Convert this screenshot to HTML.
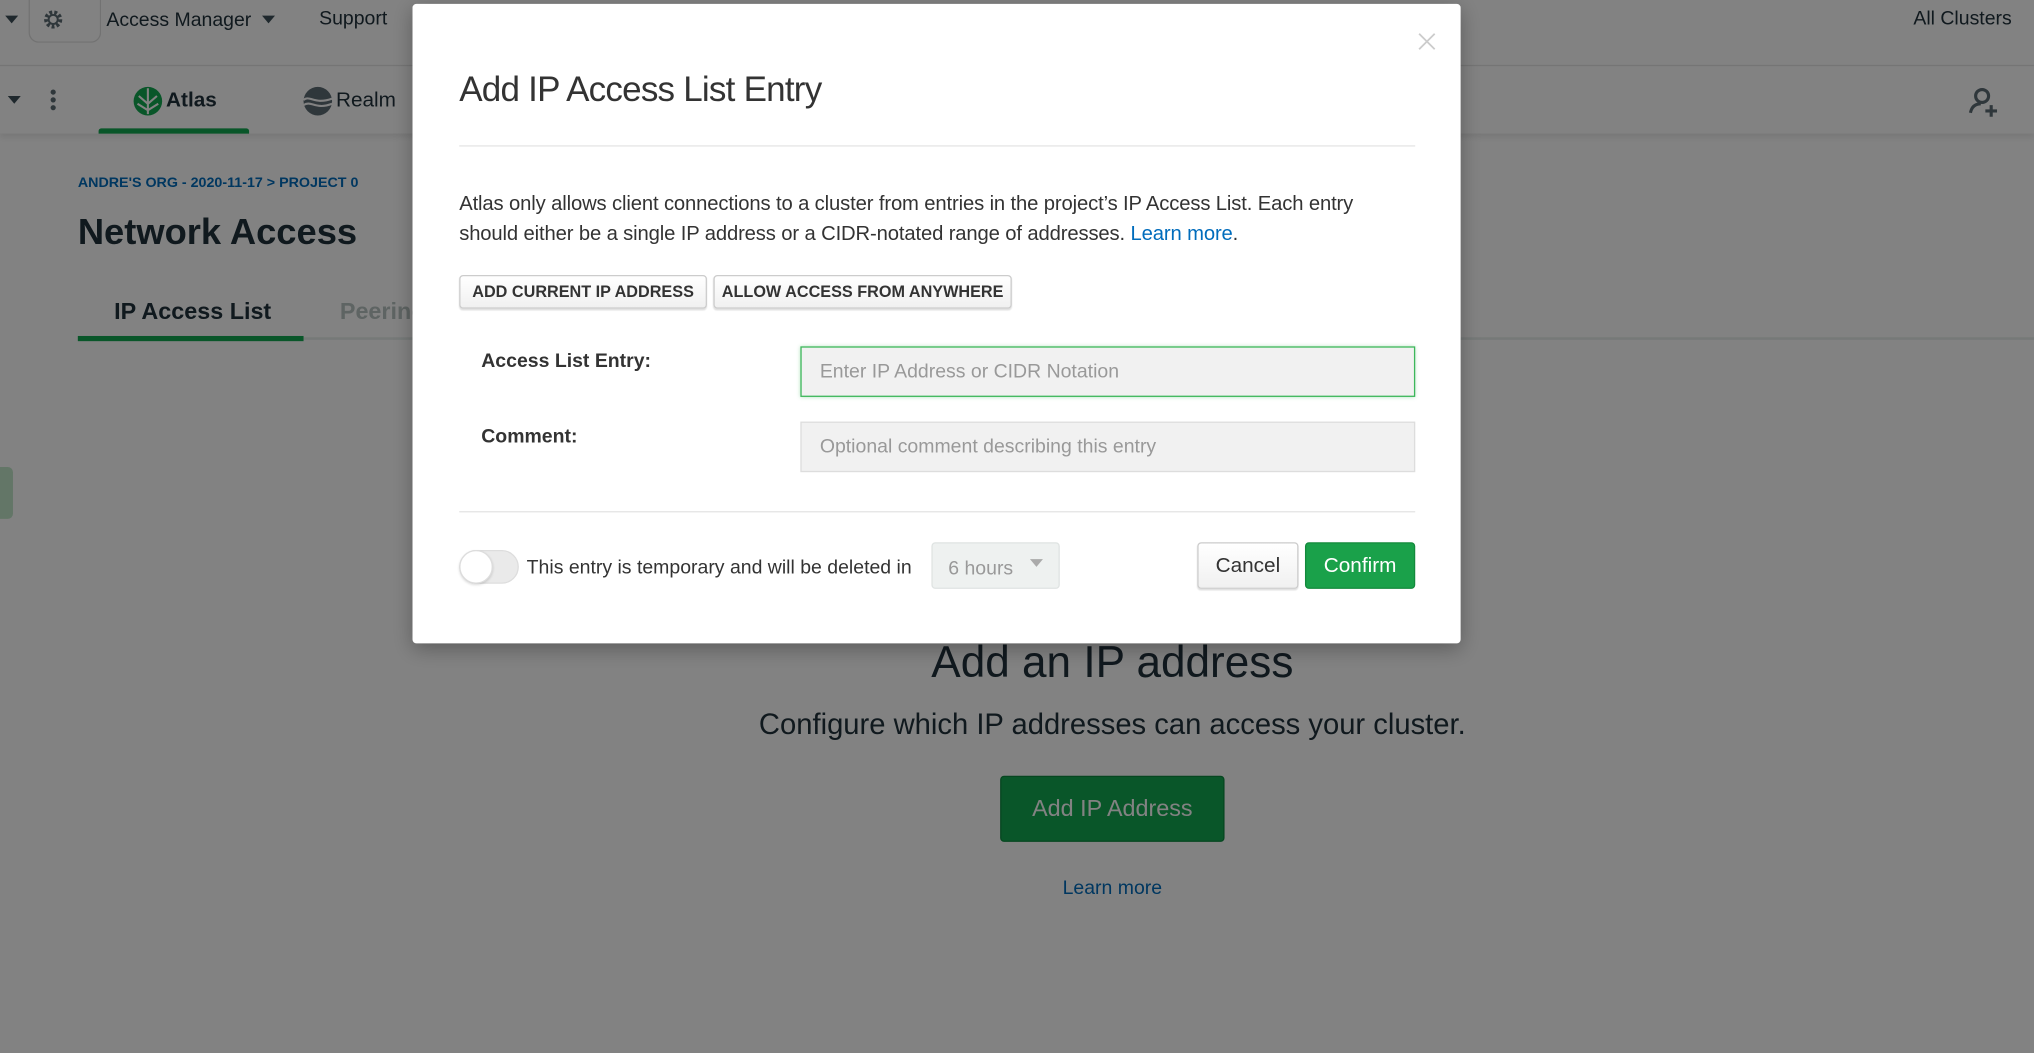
<!DOCTYPE html>
<html><head><meta charset="utf-8"><style>
html,body{margin:0;padding:0;width:2034px;height:1053px;overflow:hidden;background:#808080;}
#w{position:absolute;left:0;top:0;width:1568px;height:812px;transform:scale(1.29719);transform-origin:0 0;background:#fff;font-family:"Liberation Sans",sans-serif;color:#3d4f58;}
.a{position:absolute;}
#ov{position:absolute;left:0;top:0;width:1568px;height:812px;background:rgba(0,0,0,0.49);}
#m{position:absolute;left:318px;top:3px;width:808px;height:493px;background:#fff;border-radius:3px;box-shadow:0 4px 16px rgba(0,0,0,.3);color:#333;}
.btn{position:absolute;border:1px solid #ccc;border-radius:3px;background:linear-gradient(#fff,#f0f0f0);box-shadow:0 1px 1px rgba(0,0,0,.12);font-size:12.5px;font-weight:bold;color:#333;text-align:center;box-sizing:border-box;}
.inp{position:absolute;background:#f1f1f1;border:1px solid #ddd;box-sizing:border-box;font-size:15px;color:#999;padding-left:14px;}
</style></head><body><div id="w">
<div class="a" style="left:0;top:0;width:1568px;height:50px;border-bottom:1px solid #e6e6e6;"></div>
<div class="a" style="left:22px;top:0;width:54px;height:32px;border:1px solid #e0e0e0;border-top:none;border-radius:0 0 8px 8px;"></div>
<div class="a" style="left:4px;top:12px;width:0;height:0;border-left:5px solid transparent;border-right:5px solid transparent;border-top:6px solid #3d4f58;"></div>
<svg class="a" style="left:32px;top:6px" width="18" height="18" viewBox="0 0 18 18"><circle cx="9" cy="9" r="5.5" fill="none" stroke="#5d6c74" stroke-width="3" stroke-dasharray="2.2 1.6"/><circle cx="9" cy="9" r="3.5" fill="none" stroke="#5d6c74" stroke-width="1.5"/></svg>
<div class="a" style="left:82px;top:7px;font-size:15px;color:#21313c;">Access Manager</div>
<div class="a" style="left:202px;top:12px;border-left:5px solid transparent;border-right:5px solid transparent;border-top:6px solid #3d4f58;"></div>
<div class="a" style="left:246px;top:6px;font-size:15px;color:#21313c;">Support</div>
<div class="a" style="left:1475px;top:6px;font-size:15px;color:#21313c;">All Clusters</div>
<div class="a" style="left:0;top:51px;width:1568px;height:52px;box-shadow:0 3px 4px rgba(0,0,0,.08);"></div>
<div class="a" style="left:6px;top:74px;border-left:5px solid transparent;border-right:5px solid transparent;border-top:6px solid #3d4f58;"></div>
<div class="a" style="left:39px;top:69px;width:4px;height:4px;border-radius:2px;background:#5d6c74;box-shadow:0 6px 0 #5d6c74,0 12px 0 #5d6c74;"></div>
<svg class="a" style="left:102px;top:66px" width="24" height="24" viewBox="0 0 24 24"><circle cx="12" cy="12" r="11" fill="#13aa52"/><path d="M12 2v20M12 14l-7-6M12 14l7-6M12 19l-8-5M12 19l8-5" stroke="#fff" stroke-width="1.6" fill="none"/></svg>
<div class="a" style="left:128px;top:69px;font-size:16px;font-weight:bold;color:#21313c;">Atlas</div>
<div class="a" style="left:76px;top:99px;width:116px;height:4px;background:#13aa52;border-radius:2px 2px 0 0;"></div>
<svg class="a" style="left:233px;top:66px" width="24" height="24" viewBox="0 0 24 24"><circle cx="12" cy="12" r="11" fill="#5d6c74"/><path d="M1 11c5-4 8 4 22-1M1 15c6-4 9 4 22-1" stroke="#fff" stroke-width="1.6" fill="none"/></svg>
<div class="a" style="left:259px;top:69px;font-size:16px;color:#21313c;">Realm</div>
<svg class="a" style="left:1516px;top:66px" width="26" height="26" viewBox="0 0 26 26"><circle cx="12" cy="8" r="5" fill="none" stroke="#5d6c74" stroke-width="2.4"/><path d="M3 21c1-5 4-7 8-7" fill="none" stroke="#5d6c74" stroke-width="2.4"/><path d="M19 15v9M14.5 19.5h9" stroke="#5d6c74" stroke-width="2.4"/></svg>
<div class="a" style="left:60px;top:135px;font-size:11px;font-weight:bold;color:#006cbc;">ANDRE'S ORG - 2020-11-17 &gt; PROJECT 0</div>
<div class="a" style="left:60px;top:163px;font-size:28px;font-weight:bold;color:#21313c;">Network Access</div>
<div class="a" style="left:88px;top:230px;font-size:18px;font-weight:bold;color:#21313c;">IP Access List</div>
<div class="a" style="left:262px;top:230px;font-size:18px;font-weight:bold;color:#b8c4c2;">Peering</div>
<div class="a" style="left:60px;top:260px;width:1508px;height:2px;background:#e7eeec;"></div>
<div class="a" style="left:60px;top:259px;width:174px;height:4px;background:#13aa52;"></div>
<div class="a" style="left:0;top:360px;width:10px;height:40px;background:#c3e7ca;border-radius:0 4px 4px 0;"></div>
<div class="a" style="left:0;top:492px;width:1715px;text-align:center;font-size:34px;color:#21313c;">Add an IP address</div>
<div class="a" style="left:0;top:546px;width:1715px;text-align:center;font-size:22.5px;color:#21313c;">Configure which IP addresses can access your cluster.</div>
<div class="a" style="left:771px;top:598px;width:173px;height:51px;background:#13aa52;border:1px solid #0d8a40;box-sizing:border-box;border-radius:3px;color:#fff;font-size:18px;text-align:center;line-height:49px;">Add IP Address</div>
<div class="a" style="left:0;top:676px;width:1715px;text-align:center;font-size:15px;color:#006cbc;">Learn more</div>
<div id="ov"></div>
<div id="m">
<svg class="a" style="left:775px;top:22px" width="14" height="14" viewBox="0 0 14 14"><path d="M1 1l12 12M13 1L1 13" stroke="#ccc" stroke-width="1.4"/></svg>
<div class="a" style="left:36px;top:51px;font-size:27px;color:#333;letter-spacing:-.6px;">Add IP Access List Entry</div>
<div class="a" style="left:36px;top:109px;width:737px;height:1px;background:#e5e5e5;"></div>
<div class="a" style="left:36px;top:143px;width:760px;font-size:15.6px;line-height:23px;color:#333;letter-spacing:-.1px;white-space:nowrap;">Atlas only allows client connections to a cluster from entries in the project’s IP Access List. Each entry<br>should either be a single IP address or a CIDR-notated range of addresses. <span style="color:#006cbc">Learn more</span>.</div>
<div class="btn" style="left:36px;top:209px;width:191px;height:26px;line-height:24px;">ADD CURRENT IP ADDRESS</div>
<div class="btn" style="left:232px;top:209px;width:230px;height:26px;line-height:24px;">ALLOW ACCESS FROM ANYWHERE</div>
<div class="a" style="left:53px;top:267px;font-size:15px;font-weight:bold;color:#333;">Access List Entry:</div>
<div class="a" style="left:53px;top:325px;font-size:15px;font-weight:bold;color:#333;">Comment:</div>
<div class="inp" style="left:299px;top:264px;width:474px;height:39px;line-height:37px;border-color:#3cb75a;box-shadow:0 0 3px rgba(60,183,90,.4);">Enter IP Address or CIDR Notation</div>
<div class="inp" style="left:299px;top:322px;width:474px;height:39px;line-height:37px;">Optional comment describing this entry</div>
<div class="a" style="left:36px;top:391px;width:737px;height:1px;background:#e5e5e5;"></div>
<div class="a" style="left:36px;top:421px;width:46px;height:26px;border-radius:13px;background:#eaeaea;border:1px solid #ddd;box-sizing:border-box;"></div>
<div class="a" style="left:36px;top:421px;width:26px;height:26px;border-radius:13px;background:#fff;border:1px solid #ddd;box-sizing:border-box;box-shadow:0 1px 2px rgba(0,0,0,.15);"></div>
<div class="a" style="left:88px;top:426px;font-size:15px;color:#333;">This entry is temporary and will be deleted in</div>
<div class="a" style="left:400px;top:415px;width:99px;height:36px;background:#eef1f0;border:1px solid #dfe3e2;box-sizing:border-box;border-radius:3px;"></div>
<div class="a" style="left:413px;top:427px;font-size:15px;color:#999;">6 hours</div>
<div class="a" style="left:476px;top:428px;border-left:5px solid transparent;border-right:5px solid transparent;border-top:6px solid #aaa;"></div>
<div class="btn" style="left:605px;top:415px;width:78px;height:36px;line-height:36px;font-weight:normal;font-size:16px;">Cancel</div>
<div class="a" style="left:688px;top:415px;width:85px;height:36px;background:#1aa14a;border:1px solid #138a3c;box-sizing:border-box;border-radius:3px;color:#fff;font-size:16px;text-align:center;line-height:36px;">Confirm</div>
</div>
</div></body></html>
